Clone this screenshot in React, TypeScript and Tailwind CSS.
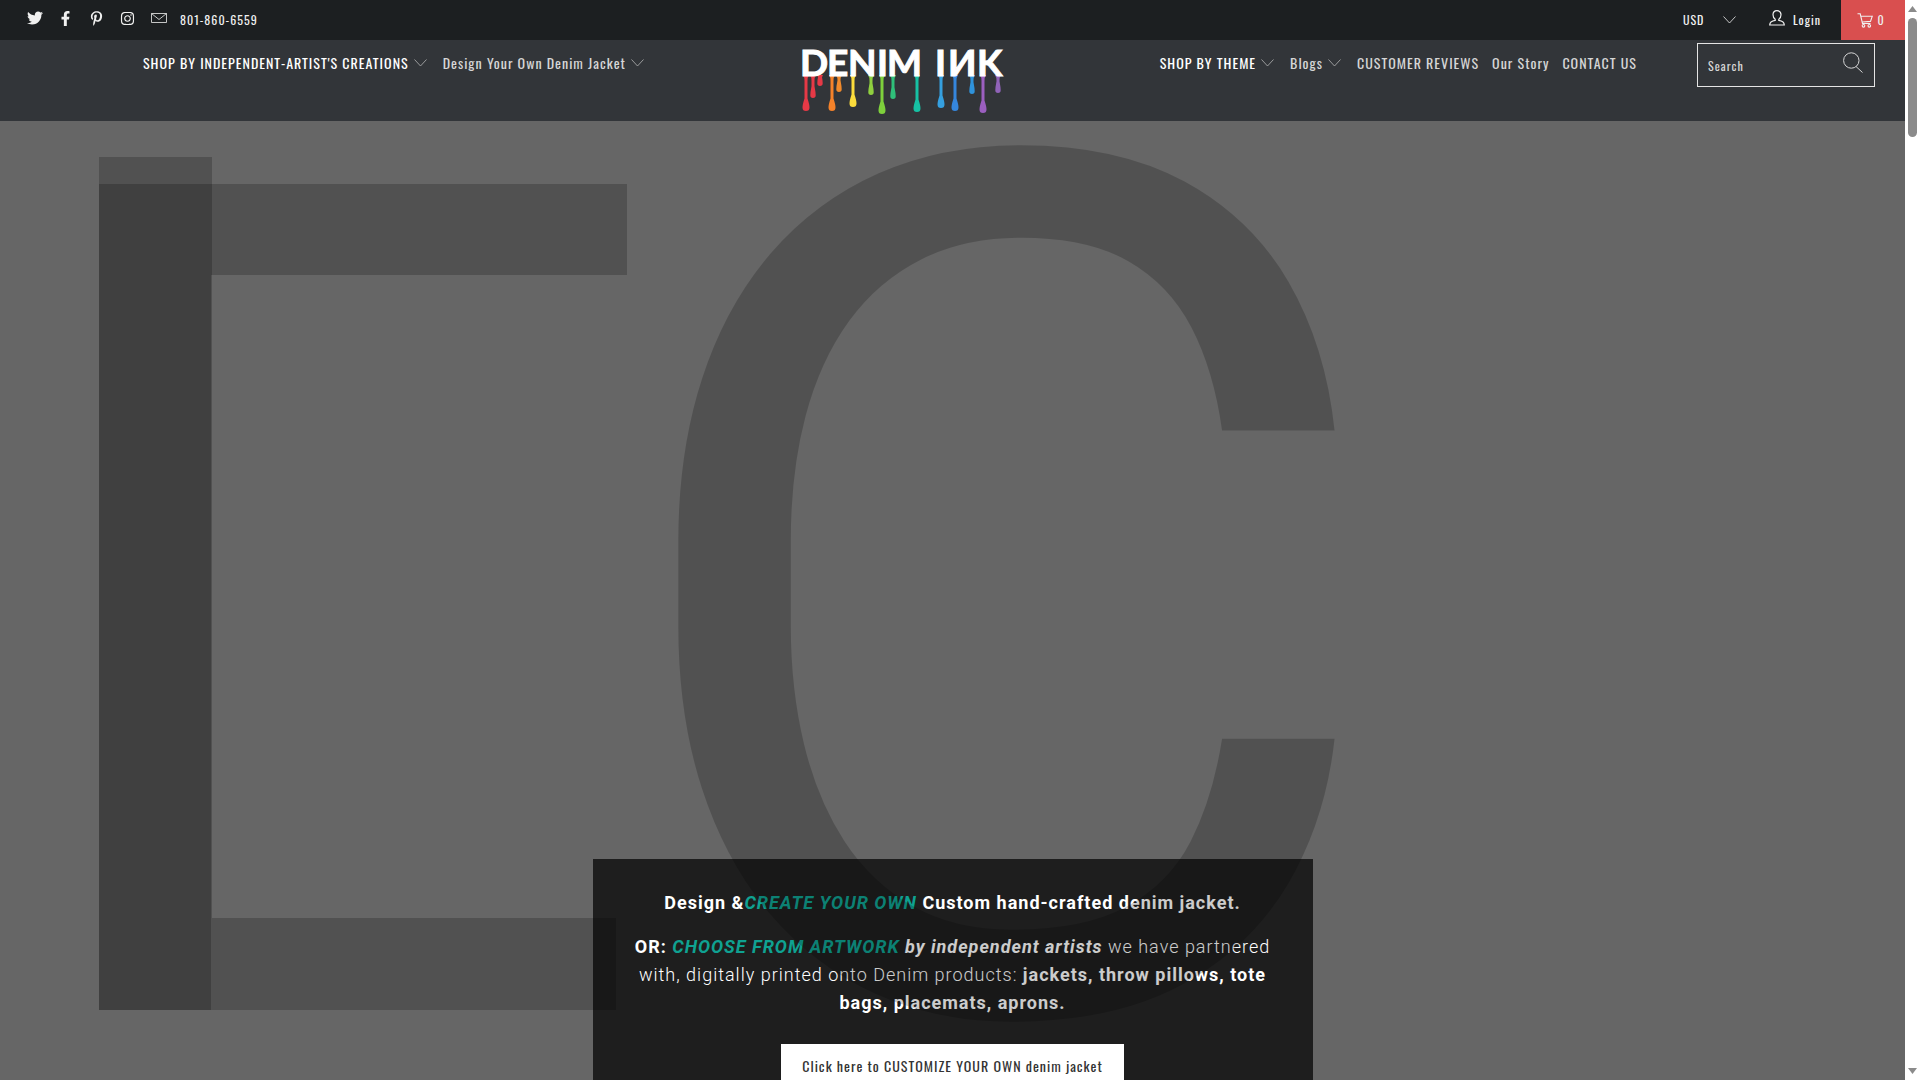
import React from 'react';
import { FaTwitter, FaFacebookF, FaPinterestP, FaInstagram } from 'react-icons/fa';

interface NavItem {
  label: string;
  hasMenu?: boolean;
  strong?: boolean;
}

interface Drip {
  x: number;
  end: number;
  color: string;
  big?: boolean;
}

const LEFT_NAV: NavItem[] = [
  { label: "SHOP BY INDEPENDENT-ARTIST'S CREATIONS", hasMenu: true, strong: true },
  { label: 'Design Your Own Denim Jacket', hasMenu: true },
];

const RIGHT_NAV: NavItem[] = [
  { label: 'SHOP BY THEME', hasMenu: true, strong: true },
  { label: 'Blogs', hasMenu: true },
  { label: 'CUSTOMER REVIEWS' },
  { label: 'Our Story' },
  { label: 'CONTACT US' },
];

const SOCIAL = [
  { label: 'Twitter', icon: <FaTwitter size={16} /> },
  { label: 'Facebook', icon: <FaFacebookF size={15} /> },
  { label: 'Pinterest', icon: <FaPinterestP size={15} /> },
  { label: 'Instagram', icon: <FaInstagram size={15} /> },
  { label: 'Email', icon: <MailIcon /> },
];

const DRIPS: Drip[] = [
  { x: 4, end: 63, color: '#e63946', big: true },
  { x: 11, end: 50, color: '#e63946' },
  { x: 18, end: 38, color: '#e63946' },
  { x: 30, end: 63, color: '#f5822a', big: true },
  { x: 37, end: 44, color: '#f08a2c' },
  { x: 51, end: 59, color: '#fbdc3c', big: true },
  { x: 69, end: 47, color: '#8fd03f' },
  { x: 80, end: 66, color: '#7ed03c', big: true },
  { x: 91, end: 51, color: '#2fc07a' },
  { x: 115, end: 64, color: '#16c1a4', big: true },
  { x: 139, end: 60, color: '#35a0e0', big: true },
  { x: 153, end: 63, color: '#3586dd', big: true },
  { x: 170, end: 46, color: '#2f93dc' },
  { x: 181, end: 65, color: '#9b5fc0', big: true },
  { x: 196, end: 45, color: '#9063b8' },
];

function MailIcon() {
  return (
    <svg width="16" height="10" viewBox="0 0 16 10" fill="none" stroke="currentColor">
      <path d="M.5 .5h15v9H.5zM.5 .5 8 6.500 15.500 .5" strokeWidth="0.8" />
    </svg>
  );
}

function ChevronIcon() {
  return (
    <svg width="13" height="8" viewBox="0 0 13 8" fill="none" stroke="currentColor" strokeWidth="0.8">
      <path d="M.5 .5l6 6.500 6-6.500" />
    </svg>
  );
}

function UserIcon() {
  return (
    <svg width="16" height="16" viewBox="0 0 16 16" fill="none" stroke="currentColor" strokeWidth="1.2">
      <path d="M8 .7c-2.500 0-4 1.700-4 4.100 0 1.900.9 3.500 2.200 4.400v1.200C3.500 10.800.8 11.800.7 15h14.600c-.1-3.200-2.800-4.200-5.500-4.600V9.200C11.100 8.300 12 6.700 12 4.800 12 2.400 10.500.7 8 .7z" />
    </svg>
  );
}

function CartIcon() {
  return (
    <svg width="16" height="15" viewBox="0 0 16 15" fill="none" stroke="currentColor" strokeWidth="1.1">
      <path d="M.5 .8h2.700l2.300 9.700h8M3.800 3.200h11.500l-1.800 5.200-8.300.6" />
      <circle cx="6.500" cy="12.800" r="1.300" />
      <circle cx="12.300" cy="12.800" r="1.300" />
    </svg>
  );
}

function SearchIcon() {
  return (
    <svg width="20" height="21" viewBox="0 0 20 21" fill="none" stroke="currentColor" strokeWidth="1">
      <circle cx="8.300" cy="8.500" r="7.700" />
      <path d="M13 14.500l6.500 6" />
    </svg>
  );
}

// Paint drip: flared at the letter, thin neck, round drop at the end
function dripPath({ x, end, big }: Drip) {
  const r = big ? 3.5 : 2.7;
  const y = end - r;
  return `M${x - 3} 27h6q-1.500 2-1.500 6L${x + 1.5} ${y - 9}Q${x + r} ${y - 3} ${x + r} ${y}A${r} ${r} 0 0 1 ${x - r} ${y}Q${x - r} ${y - 3} ${x - 1.5} ${y - 9}L${x - 1.5} 33q0-4-1.500-6z`;
}

function Logo() {
  return (
    <svg width="210" height="70" viewBox="-4 0 210 70" role="img" aria-label="Denim Ink">
      {DRIPS.map(drip => (
        <path key={drip.x} d={dripPath(drip)} fill={drip.color} />
      ))}
      <text
        x="-2 25 46 75 85 125 133 146 175"
        y="28"
        fill="#fff"
        stroke="#fff"
        strokeWidth="1"
        fontFamily="Lato, sans-serif"
        fontWeight="700"
        fontSize="37"
      >
        DENIM IИK
      </text>
    </svg>
  );
}

function NavList({ items }: { items: NavItem[] }) {
  return (
    <ul className="flex gap-[13px] whitespace-nowrap">
      {items.map(item => (
        <li key={item.label}>
          <a href="#" className={`flex items-center gap-[5px] ${item.strong ? 'text-white' : 'text-[#d6d6d6]'}`}>
            {item.label}
            {item.hasMenu && (
              <span className="pr-[3px] text-[#b5b5b5]">
                <ChevronIcon />
              </span>
            )}
          </a>
        </li>
      ))}
    </ul>
  );
}

function TopBar() {
  return (
    <div className="flex h-10 items-center justify-between bg-[#1c1f21] text-[12px] text-[#f0f0f0]">
      <div className="flex items-center pl-[19px]">
        {SOCIAL.map(item => (
          <a key={item.label} href="#" aria-label={item.label} className="flex h-5 w-[31px] items-center justify-center pb-1">
            {item.icon}
          </a>
        ))}
        <a href="tel:8018606559" className="ml-[6px]">801-860-6559</a>
      </div>
      <div className="flex h-full items-center">
        <div className="mr-[33px] flex items-center">
          <select aria-label="Currency" className="w-10 appearance-none bg-transparent tracking-[1px]">
            <option>USD</option>
          </select>
          <ChevronIcon />
        </div>
        <a href="#" className="mr-[20px] flex items-center gap-2">
          <span className="pb-1">
            <UserIcon />
          </span>
          Login
        </a>
        <a href="#" aria-label="Cart" className="flex h-full w-16 items-center justify-center gap-1 bg-[#d94f4f] pr-1">
          <CartIcon />
          0
        </a>
      </div>
    </div>
  );
}

function MainNav() {
  return (
    <div className="flex h-[81px] items-start justify-between bg-[#323539] pr-[30px] pl-[143px] text-[14px]">
      <nav className="w-[655px] pt-3">
        <NavList items={LEFT_NAV} />
      </nav>
      <a href="#" className="pt-2">
        <Logo />
      </a>
      <div className="flex flex-1 justify-end gap-[60px]">
        <nav className="pt-3">
          <NavList items={RIGHT_NAV} />
        </nav>
        <form className="mt-[3px] flex h-11 w-[178px] items-start border border-[#e4e4e4] text-[#d6d6d6]">
          <input
            type="text"
            aria-label="Search"
            placeholder="Search"
            className="h-full w-[145px] bg-transparent pl-[10px] text-[12px] tracking-[1px] placeholder:text-[#d6d6d6] focus:outline-none"
          />
          <button type="button" aria-label="Submit search" className="pt-2">
            <SearchIcon />
          </button>
        </form>
      </div>
    </div>
  );
}

// Oversized translucent lettering laid over the whole banner
function BackdropLetters() {
  return (
    <svg
      aria-hidden="true"
      width="1400"
      height="959"
      viewBox="0 0 1400 959"
      fillOpacity="0.2"
      className="pointer-events-none absolute top-0 left-0 tracking-normal"
    >
      <path d="M99 36h113v761h404v92H99z" />
      <path d="M99 63h528v91H211v735H99z" />
      <text x="608" y="889" fontFamily="Roboto, sans-serif" fontSize="1200">C</text>
    </svg>
  );
}

function Hero() {
  return (
    <main className="relative flex flex-1 items-end justify-center overflow-hidden bg-[#666]">
      <section className="flex h-[221px] w-[720px] flex-col items-center bg-black/70 px-8 pt-[30px] text-center font-['Roboto',sans-serif] text-[18px] leading-7 font-light text-white">
        <p className="mb-4 font-bold">
          Design &amp;<a href="#" className="text-[#0fa292] italic">CREATE YOUR OWN</a> Custom hand-crafted denim jacket.
        </p>
        <p className="mb-[27px]">
          <b className="font-bold">OR: </b>
          <a href="#" className="font-bold text-[#0fa292] italic">CHOOSE FROM ARTWORK</a>
          <b className="font-bold italic"> by independent artists</b> we have partnered with, digitally printed onto Denim products:{' '}
          <b className="font-bold">jackets, throw pillows, tote bags, placemats, aprons.</b>
        </p>
        <button className="h-11 w-[343px] shrink-0 bg-white font-['Oswald',sans-serif] text-[14px] font-normal tracking-[1px] text-[#333]">
          Click here to CUSTOMIZE YOUR OWN denim jacket
        </button>
      </section>
      <BackdropLetters />
    </main>
  );
}

function ScrollTrack() {
  return (
    <div aria-hidden="true" className="flex w-[15px] flex-col items-center bg-white py-[6px] text-[#8b8b8b]">
      <svg width="9" height="6" viewBox="0 0 9 6" fill="currentColor">
        <path d="M4.500 0 9 6H0z" />
      </svg>
      <div className="mt-[6px] h-[119px] w-[9px] rounded-full bg-[#8b8b8b]" />
      <svg width="9" height="6" viewBox="0 0 9 6" fill="currentColor" className="mt-auto">
        <path d="M0 0h9L4.500 6z" />
      </svg>
    </div>
  );
}

const App: React.FC = () => {
  return (
    <div className="flex h-screen overflow-hidden font-['Oswald',sans-serif] tracking-[1px]">
      <div className="flex min-w-0 flex-1 flex-col">
        <header>
          <TopBar />
          <MainNav />
        </header>
        <Hero />
      </div>
      <ScrollTrack />
    </div>
  );
};

export default App;
